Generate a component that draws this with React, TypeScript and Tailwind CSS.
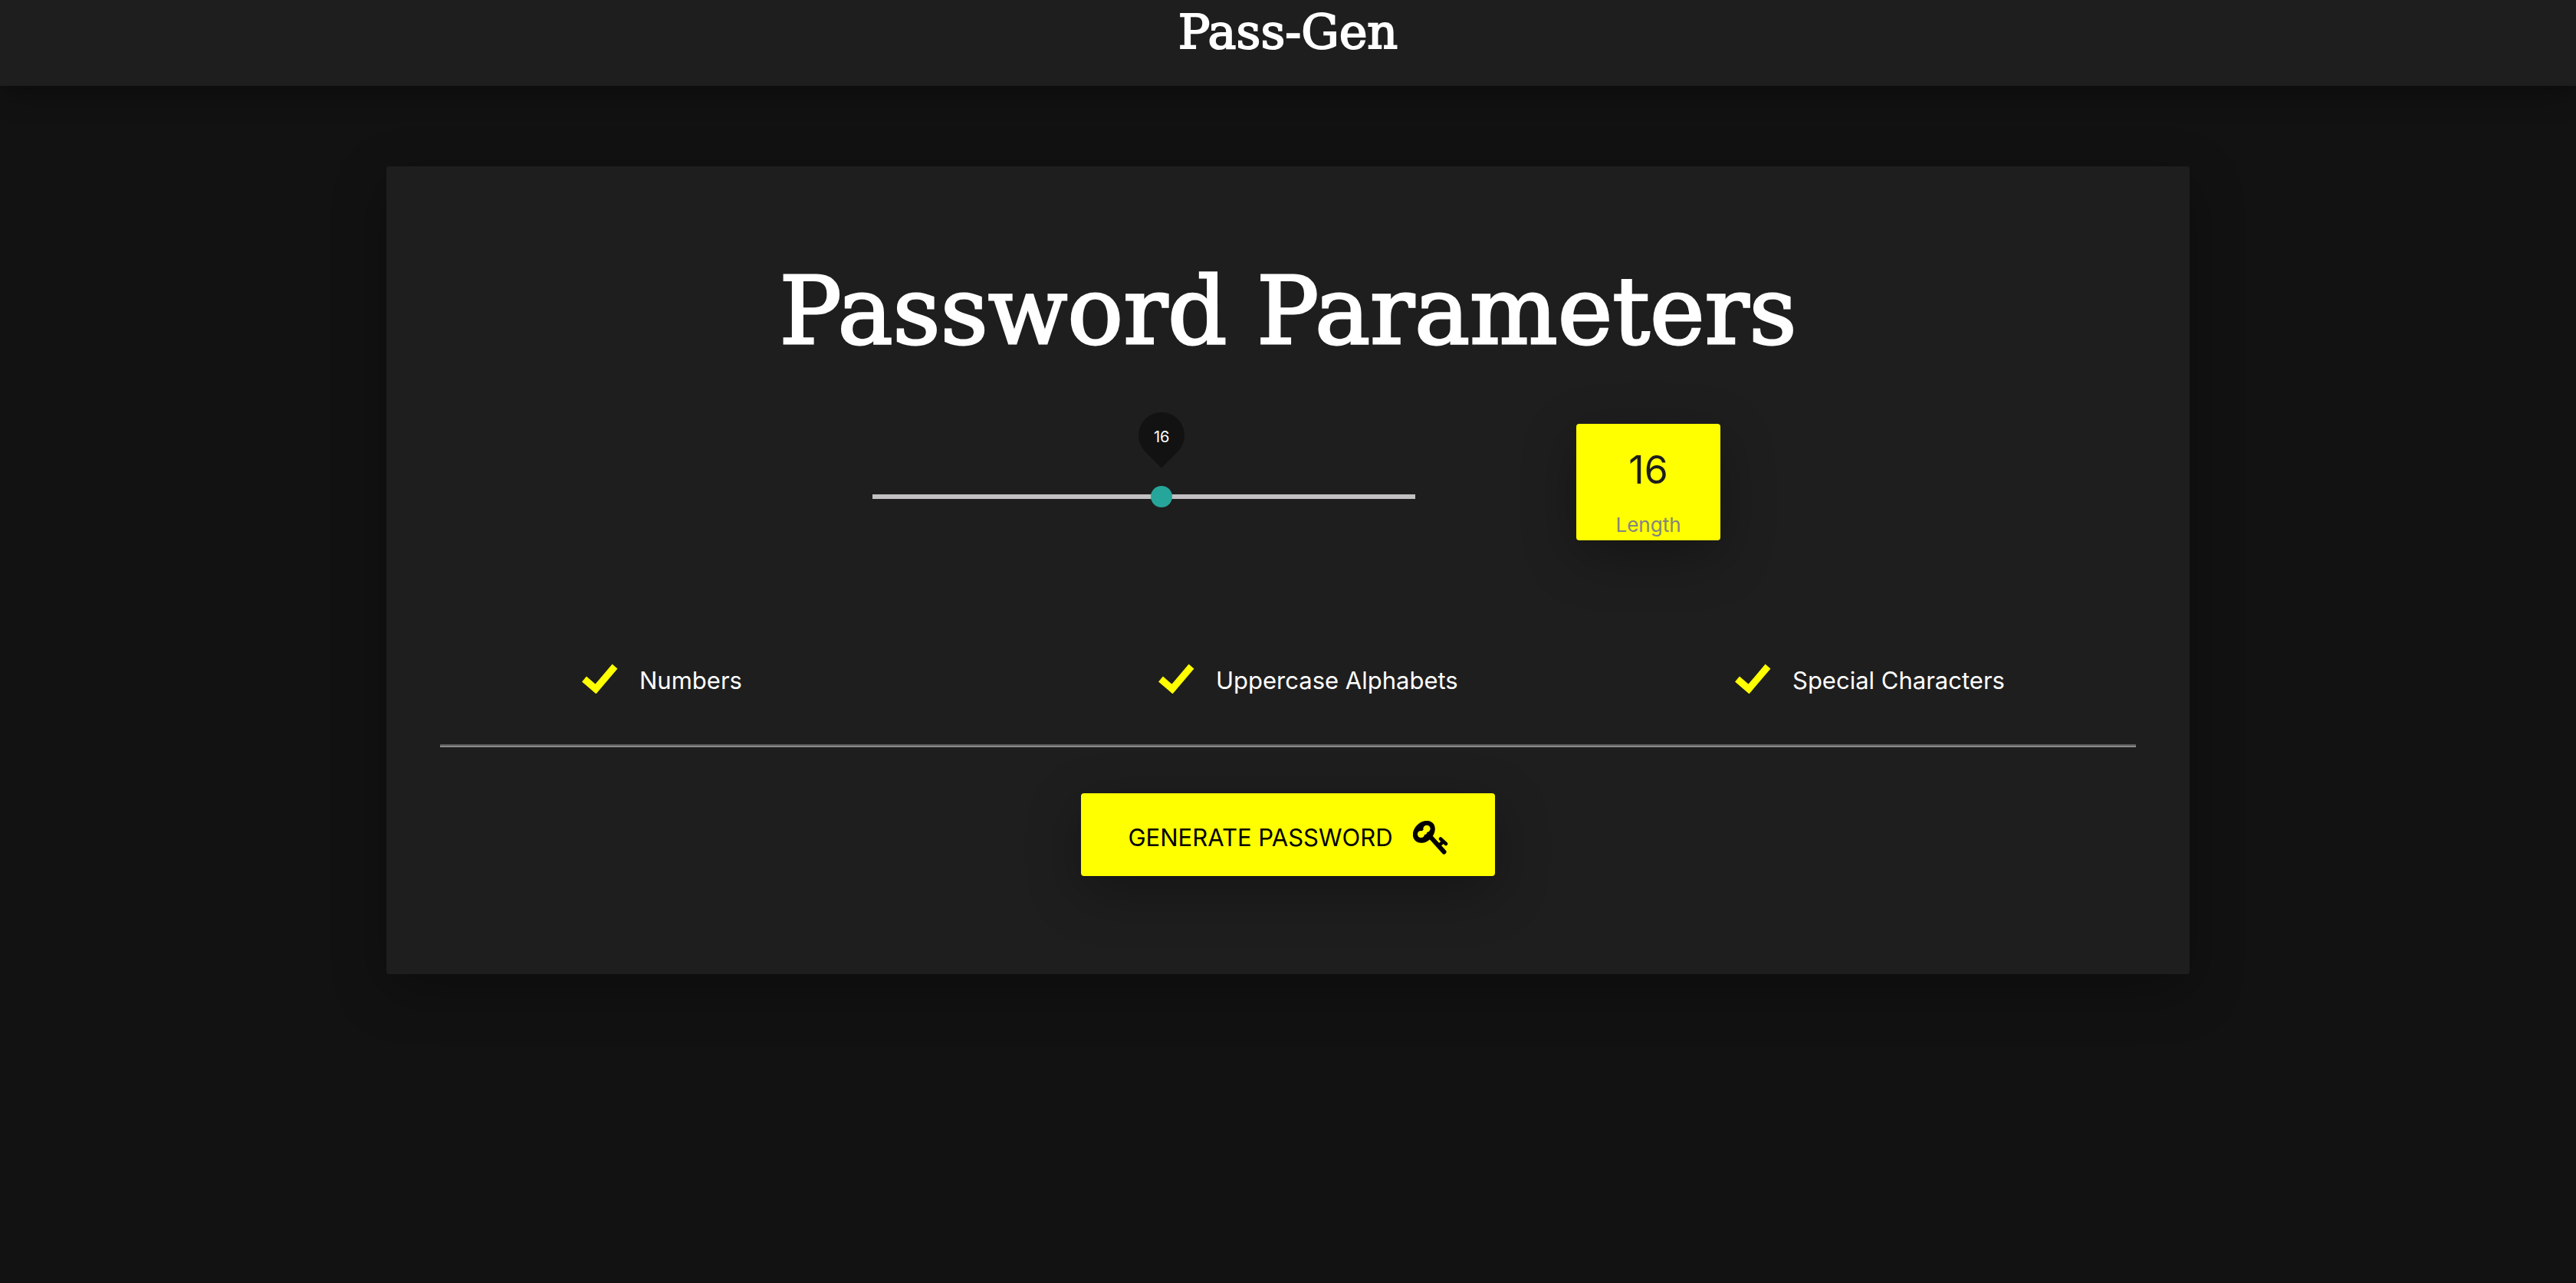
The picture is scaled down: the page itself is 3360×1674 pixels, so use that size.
import { useState } from "react";

const MAX_LENGTH = 30;

function CheckOption({ id, label }: { id: string; label: string }) {
  return (
    <div className="col-span-3 flex items-center px-[18px]">
      <label htmlFor={id} className="flex cursor-pointer items-center gap-7">
        <span className="grid h-10 w-12 place-items-center">
          <input
            id={id}
            type="checkbox"
            defaultChecked
            className="peer col-start-1 row-start-1 h-10 w-12 cursor-pointer appearance-none"
          />
          <svg
            viewBox="0 0 48 40"
            aria-hidden="true"
            className="pointer-events-none invisible col-start-1 row-start-1 h-10 w-12 peer-checked:visible"
          >
            <path d="M4 21 19 34 44 4.500" fill="none" stroke="#ffff00" strokeWidth="9" />
          </svg>
        </span>
        <span className="pt-1.5 text-[31px] leading-10 whitespace-nowrap text-white">{label}</span>
      </label>
    </div>
  );
}

function KeyIcon() {
  return (
    <svg viewBox="0 0 46 44" aria-hidden="true" className="h-11 w-[46px]">
      <ellipse cx="14.300" cy="14.300" rx="16.200" ry="12.500" transform="rotate(-45 14.300 14.300)" fill="currentColor" />
      <g fill="#ffff00">
        <circle cx="18" cy="10.300" r="4.600" />
        <circle cx="10.500" cy="17.500" r="4.600" />
        <circle cx="15" cy="14.800" r="3.200" />
      </g>
      <g fill="none" stroke="currentColor" strokeLinecap="round">
        <path d="M22 20 40.500 40.500" strokeWidth="6" />
        <path d="M33 33 39 27.500M36 23.500 43 30" strokeWidth="4.500" />
      </g>
    </svg>
  );
}

export default function App() {
  const [length, setLength] = useState(16);
  const ratio = length / MAX_LENGTH;

  return (
    <div className="min-h-screen bg-[#121212] font-['Inter',sans-serif] text-white">
      <nav className="flex h-28 justify-center bg-[#1e1e1e] shadow-[0_8px_32px_rgba(0,0,0,0.4)]">
        <a href="#" className="font-['DejaVu_Serif',serif] text-[62px] leading-[84px] [-webkit-text-stroke:2px_white]">
          Pass-Gen
        </a>
      </nav>

      <main className="mx-auto mt-[105px] w-[70%] rounded bg-[#1e1e1e] px-12 pt-[118px] pb-32 shadow-[0_20px_70px_rgba(0,0,0,0.3)]">
        <h1 className="text-center font-['DejaVu_Serif',serif] text-[121px] leading-[144px] whitespace-nowrap [-webkit-text-stroke:3px_white]">
          Password Parameters
        </h1>

        <section className="mt-[74px] grid h-[152px] grid-cols-12">
          <div className="relative col-span-4 col-start-4 mx-[22px] flex items-center pt-[38px]">
            <input
              type="range"
              aria-label="Password length"
              min={0}
              max={MAX_LENGTH}
              value={length}
              onChange={(e) => setLength(Number(e.target.value))}
              className="h-7 w-full cursor-pointer appearance-none bg-transparent [&::-webkit-slider-runnable-track]:h-1.5 [&::-webkit-slider-runnable-track]:bg-[#c2c0c2] [&::-webkit-slider-thumb]:-mt-[11px] [&::-webkit-slider-thumb]:size-7 [&::-webkit-slider-thumb]:appearance-none [&::-webkit-slider-thumb]:rounded-full [&::-webkit-slider-thumb]:bg-[#26a69a]"
            />
            <div className="pointer-events-none absolute inset-x-3.5 -top-[15px]">
              <output
                className="relative -ml-[30px] grid size-[60px] -rotate-45 place-items-center rounded-full rounded-bl-none bg-[#121212]"
                style={{ left: `${ratio * 100}%` }}
              >
                <span className="rotate-45 pt-1 text-xl leading-6">{length}</span>
              </output>
            </div>
          </div>
          <div className="col-start-9 flex flex-col items-center rounded bg-[#ffff00] pt-8 shadow-[0_20px_70px_rgba(0,0,0,0.3)]">
            <span className="text-[50px] leading-[56px] text-[#1e1e1e]">{length}</span>
            <span className="mt-7 text-[26px] leading-8 text-[#848484]">Length</span>
          </div>
        </section>

        <section className="mt-[157px] grid grid-cols-12">
          <div />
          <CheckOption id="numbers" label="Numbers" />
          <div />
          <CheckOption id="uppercase" label="Uppercase Alphabets" />
          <div />
          <CheckOption id="special" label="Special Characters" />
        </section>

        <hr className="mx-[22px] mt-[63px] border-t-2 border-b-2 border-t-[#5a5a5a] border-b-[#8a8a8a]" />

        <div className="mt-[60px] flex justify-center">
          <button
            type="button"
            className="flex h-[108px] cursor-pointer items-center gap-[26px] rounded bg-[#ffff00] px-[61px] pt-2 text-[31px] whitespace-nowrap text-black shadow-[0_20px_70px_rgba(0,0,0,0.3)]"
          >
            <span>GENERATE PASSWORD</span>
            <KeyIcon />
          </button>
        </div>
      </main>
    </div>
  );
}
